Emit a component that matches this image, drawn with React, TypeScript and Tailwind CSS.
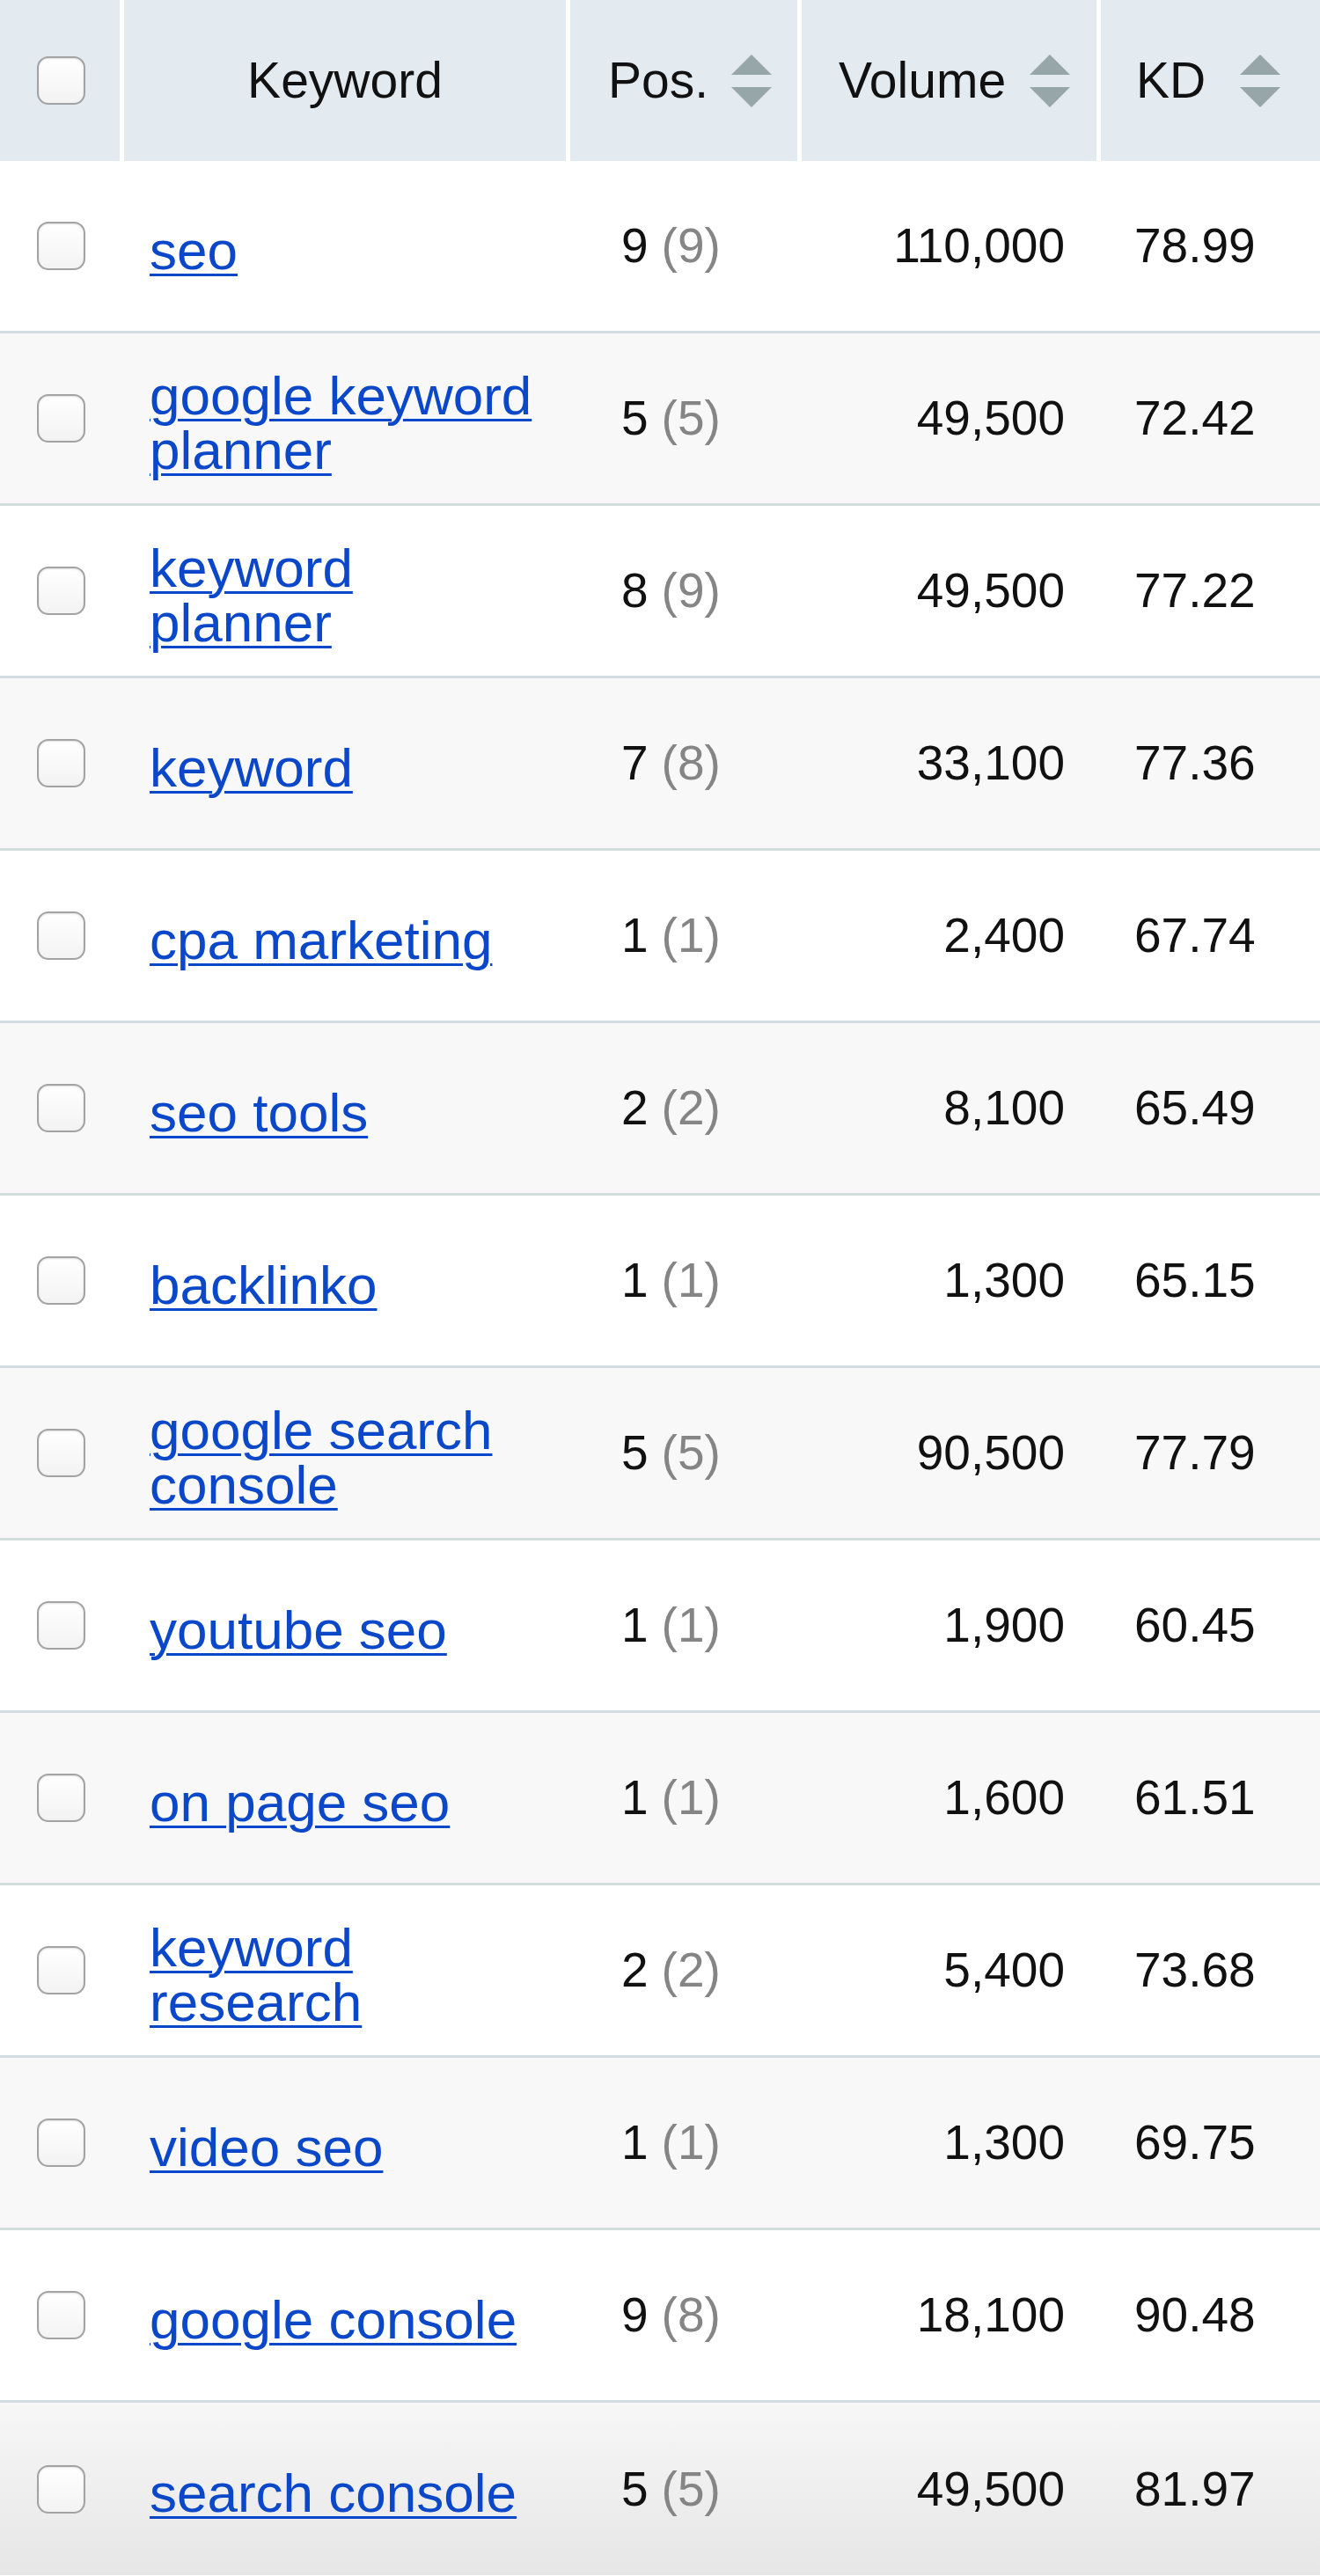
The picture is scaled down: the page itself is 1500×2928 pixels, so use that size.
import React from "react";

type Row = {
    keyword: string;
    pos: number;
    prev: number;
    volume: string;
    kd: string;
};

const rows: Row[] = [
    { keyword: "seo", pos: 9, prev: 9, volume: "110,000", kd: "78.99" },
    { keyword: "google keyword planner", pos: 5, prev: 5, volume: "49,500", kd: "72.42" },
    { keyword: "keyword planner", pos: 8, prev: 9, volume: "49,500", kd: "77.22" },
    { keyword: "keyword", pos: 7, prev: 8, volume: "33,100", kd: "77.36" },
    { keyword: "cpa marketing", pos: 1, prev: 1, volume: "2,400", kd: "67.74" },
    { keyword: "seo tools", pos: 2, prev: 2, volume: "8,100", kd: "65.49" },
    { keyword: "backlinko", pos: 1, prev: 1, volume: "1,300", kd: "65.15" },
    { keyword: "google search console", pos: 5, prev: 5, volume: "90,500", kd: "77.79" },
    { keyword: "youtube seo", pos: 1, prev: 1, volume: "1,900", kd: "60.45" },
    { keyword: "on page seo", pos: 1, prev: 1, volume: "1,600", kd: "61.51" },
    { keyword: "keyword research", pos: 2, prev: 2, volume: "5,400", kd: "73.68" },
    { keyword: "video seo", pos: 1, prev: 1, volume: "1,300", kd: "69.75" },
    { keyword: "google console", pos: 9, prev: 8, volume: "18,100", kd: "90.48" },
    { keyword: "search console", pos: 5, prev: 5, volume: "49,500", kd: "81.97" },
];

const cols = "grid grid-cols-[141px_507px_263px_340px_249px]";

function Checkbox() {
    return (
        <div className="w-[55px] h-[55px] rounded-[13px] border-[2.5px] border-[#a3a3a3] bg-gradient-to-b from-[#ffffff] to-[#f3f3f3] shadow-[inset_0_1px_2px_rgba(0,0,0,0.12)]" />
    );
}

function SortArrows() {
    return (
        <svg width="46" height="60" viewBox="0 0 46 60" className="shrink-0">
            <polygon points="23,0 46,23 0,23" fill="#97a6a8" />
            <polygon points="0,37 46,37 23,60" fill="#97a6a8" />
        </svg>
    );
}

export default function App() {
    return (
        <div
            className="w-[1500px] bg-white text-[#111]"
            style={{ fontFamily: '"Liberation Sans", Arial, Helvetica, sans-serif' }}
        >
            {/* Header */}
            <div className={`${cols} h-[183px] text-[57px] leading-none`}>
                <div className="bg-[#e3ebf1] border-r-[5px] border-white flex items-center pl-[42px]">
                    <Checkbox />
                </div>
                <div className="bg-[#e3ebf1] border-r-[5px] border-white flex items-center justify-center">
                    Keyword
                </div>
                <div className="bg-[#e3ebf1] border-r-[5px] border-white flex items-center pl-[43px] gap-[26px]">
                    <span>Pos.</span>
                    <SortArrows />
                </div>
                <div className="bg-[#e3ebf1] border-r-[5px] border-white flex items-center pl-[42px] gap-[27px]">
                    <span>Volume</span>
                    <SortArrows />
                </div>
                <div className="bg-[#e3ebf1] flex items-center pl-[40px] gap-[39px]">
                    <span>KD</span>
                    <SortArrows />
                </div>
            </div>

            {/* Rows */}
            {rows.map((r, i) => {
                const last = i === rows.length - 1;
                const bg = last
                    ? "bg-gradient-to-b from-[#f7f7f7] to-[#e6e6e6]"
                    : i % 2 === 1
                    ? "bg-[#f8f8f8]"
                    : "bg-white";
                return (
                    <div
                        key={r.keyword}
                        className={`${cols} h-[196px] ${bg} ${last ? "" : "border-b-[3px] border-[#d4dcdf]"}`}
                    >
                        <div className="flex items-center pl-[42px]">
                            <Checkbox />
                        </div>
                        <div className="flex items-center pl-[29px] pt-[10px]">
                            <a
                                href="#"
                                className="block max-w-[448px] text-[62px] leading-[62px] text-[#0a47c9] underline decoration-[3px] underline-offset-[5px]"
                            >
                                {r.keyword}
                            </a>
                        </div>
                        <div className="flex items-center pl-[58px] text-[55px] leading-none">
                            <span>{r.pos}</span>
                            <span className="ml-[15px] text-[#858585]">({r.prev})</span>
                        </div>
                        <div className="flex items-center justify-end pr-[41px] text-[55px] leading-none">
                            {r.volume}
                        </div>
                        <div className="flex items-center pl-[38px] text-[55px] leading-none">
                            {r.kd}
                        </div>
                    </div>
                );
            })}
        </div>
    );
}
